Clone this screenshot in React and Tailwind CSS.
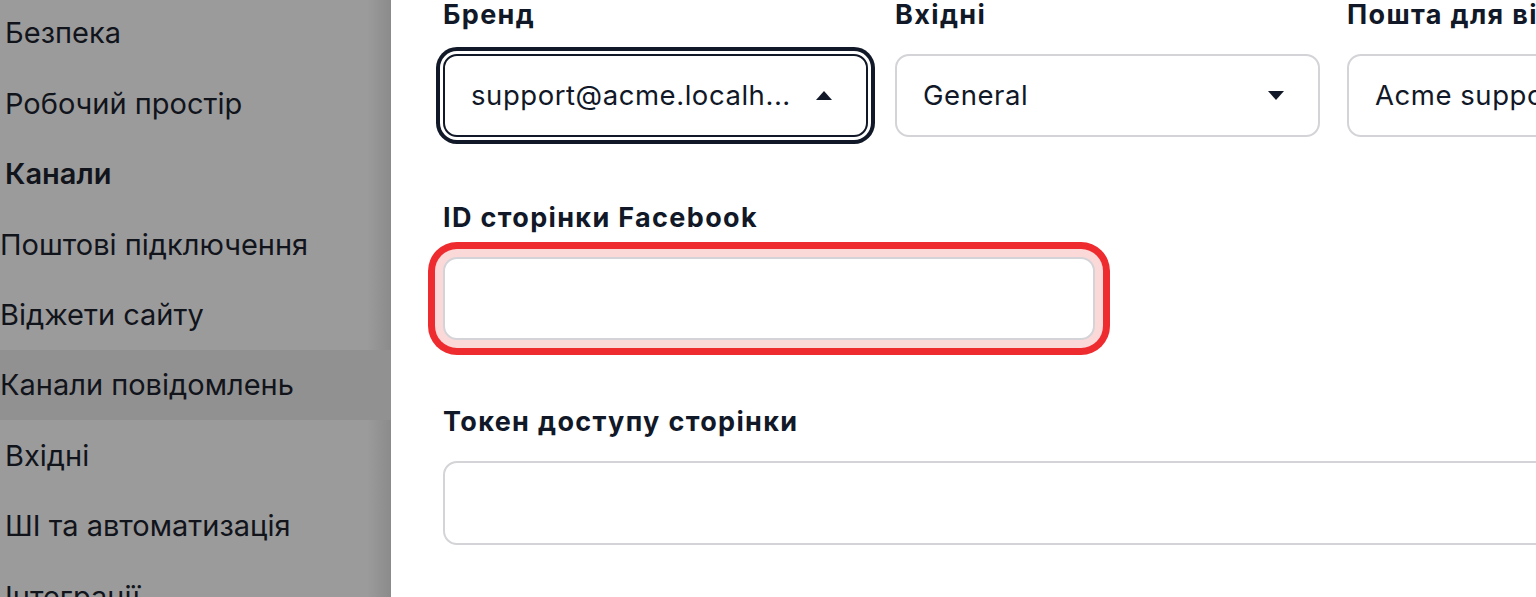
import React from 'react';

const navItems = [
  { label: 'Безпека', indent: true },
  { label: 'Робочий простір', indent: true },
  { label: 'Канали', indent: true, bold: true },
  { label: 'Поштові підключення' },
  { label: 'Віджети сайту' },
  { label: 'Канали повідомлень', active: true },
  { label: 'Вхідні', indent: true },
  { label: 'ШІ та автоматизація', indent: true },
  { label: 'Інтеграції', indent: true },
];

const Caret = ({ up }) => (
  <svg width="16" height="9" viewBox="0 0 16 9" className="shrink-0 text-[#111827]">
    {up ? <path d="M8 0L16 9H0z" fill="currentColor" /> : <path d="M0 0h16L8 9z" fill="currentColor" />}
  </svg>
);

const Label = ({ children }) => (
  <div className="text-[27px] leading-[30px] font-bold tracking-[0.05em] text-[#111827] mb-[24px] whitespace-nowrap">
    {children}
  </div>
);

const Select = ({ value, open, focused }) => (
  <div
    className={`h-[83px] rounded-[14px] border-2 bg-white flex items-center justify-between pl-[26px] pr-[34px] ${
      focused
        ? 'border-[#111827] shadow-[0_0_0_3px_#ffffff,0_0_0_7px_#111827]'
        : 'border-[#d4d4d8]'
    }`}
  >
    <span className="text-[27.5px] tracking-[0.02em] text-[#111827] whitespace-nowrap overflow-hidden">{value}</span>
    <Caret up={open} />
  </div>
);

export default function App() {
  return (
    <div className="w-[1536px] h-[597px] overflow-hidden flex bg-white" style={{ fontFamily: 'Inter, "Noto Sans", sans-serif' }}>
      {/* Sidebar, dimmed */}
      <aside className="w-[391px] shrink-0 h-full bg-[#9b9b9b] relative">
        <div className="absolute inset-y-0 right-0 w-[24px] bg-gradient-to-r from-transparent to-[#8b8b8b] pointer-events-none" />
        <nav className="-mt-[2px] relative">
          {navItems.map((item) => (
            <div
              key={item.label}
              className={`h-[70.4px] flex items-center whitespace-nowrap text-[29px] text-[#12141b] ${
                item.indent ? 'pl-[5px]' : 'pl-0'
              } ${item.bold ? 'font-semibold' : 'font-normal'} ${item.active ? 'bg-[#919191]' : ''}`}
            >
              {item.label}
            </div>
          ))}
        </nav>
      </aside>

      {/* Main form */}
      <main className="flex-1 min-w-0 overflow-hidden pl-[52px]">
        <div className="w-[1329px]">
          <div className="grid grid-cols-[425px_425px_425px] gap-x-[27px]">
            <div>
              <Label>Бренд</Label>
              <Select value="support@acme.localh..." open focused />
            </div>
            <div>
              <Label>Вхідні</Label>
              <Select value="General" />
            </div>
            <div>
              <Label>Пошта для відповіді</Label>
              <Select value="Acme support" />
            </div>
          </div>

          <div className="mt-[66px]">
            <Label>ID сторінки Facebook</Label>
            <input
              type="text"
              className="w-[652px] h-[83px] rounded-[14px] border-2 border-[#d4d4d8] bg-white outline-none shadow-[0_0_0_8px_#fcd9d9,0_0_0_15px_#ee2b2f]"
            />
          </div>

          <div className="mt-[67px]">
            <Label>Токен доступу сторінки</Label>
            <input
              type="text"
              className="w-full h-[84px] rounded-[14px] border-2 border-[#d4d4d8] bg-white outline-none"
            />
          </div>
        </div>
      </main>
    </div>
  );
}
